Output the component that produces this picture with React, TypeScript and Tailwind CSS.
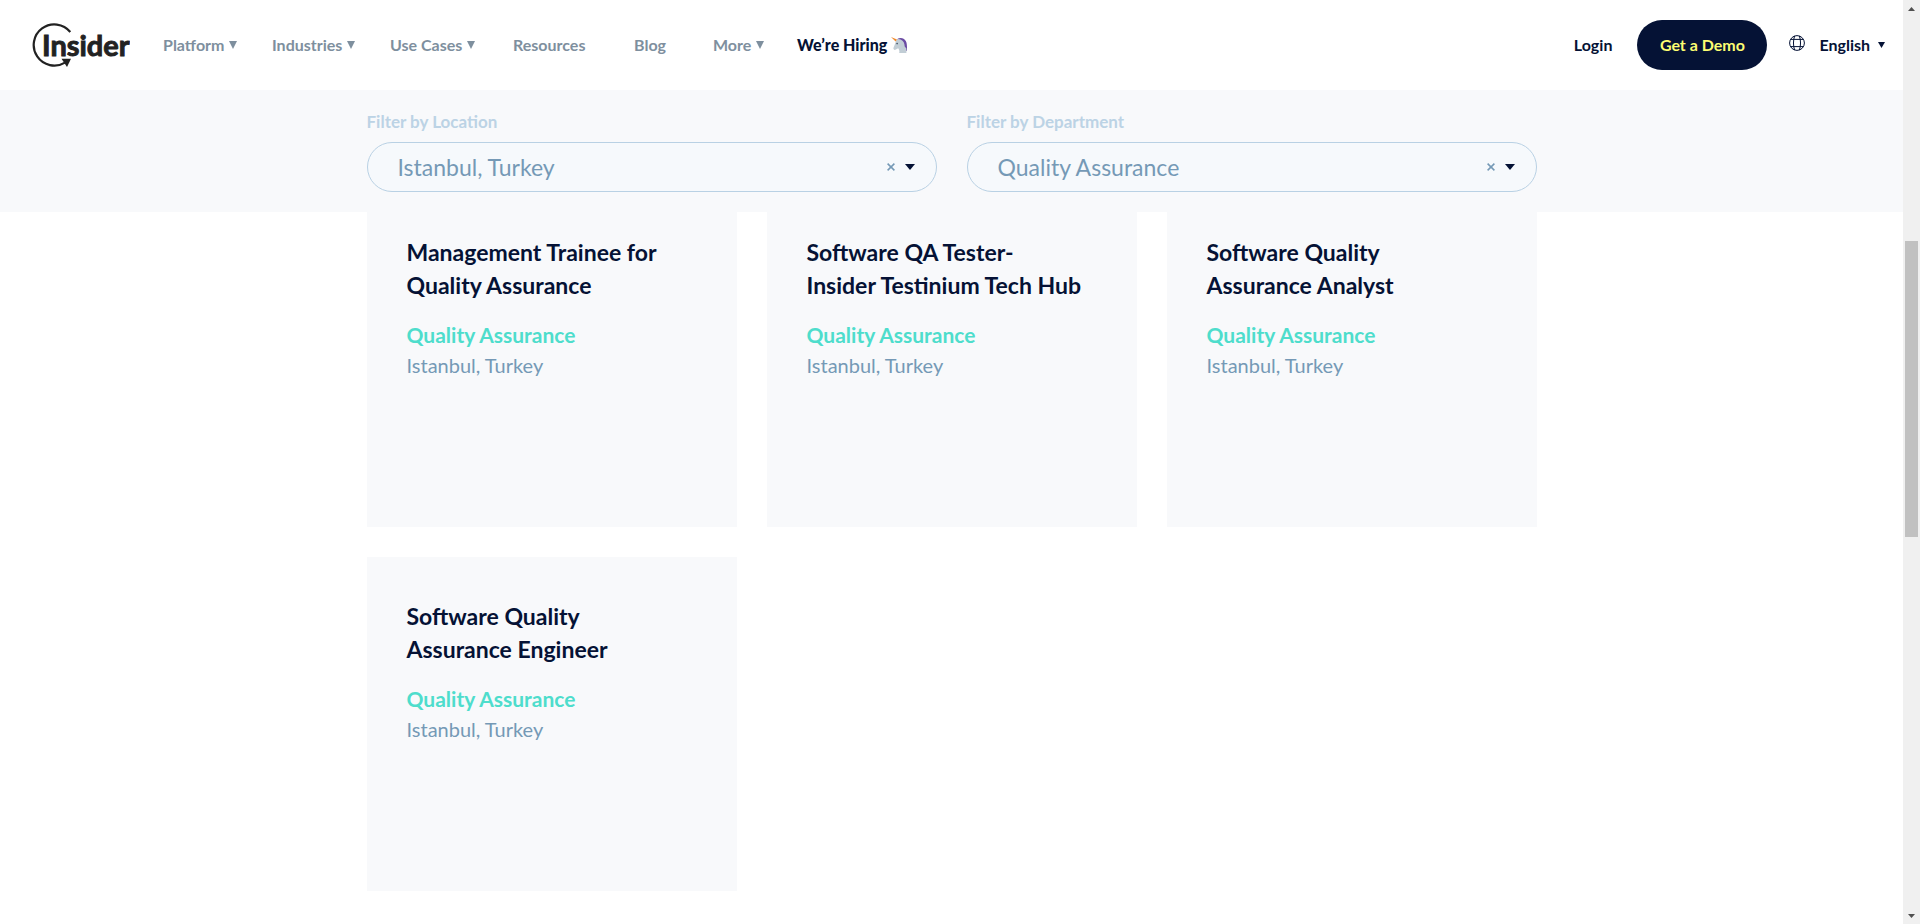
import React from "react";

type NavItem = { label: string; width: string; menu: boolean };

const navItems: NavItem[] = [
  { label: "Platform", width: "w-[109px]", menu: true },
  { label: "Industries", width: "w-[118px]", menu: true },
  { label: "Use Cases", width: "w-[123px]", menu: true },
  { label: "Resources", width: "w-[121px]", menu: false },
  { label: "Blog", width: "w-[79px]", menu: false },
  { label: "More", width: "w-[84px]", menu: true },
];

const jobs: [string, string][] = [
  ["Management Trainee for", "Quality Assurance"],
  ["Software QA Tester-", "Insider Testinium Tech Hub"],
  ["Software Quality", "Assurance Analyst"],
  ["Software Quality", "Assurance Engineer"],
];

function Triangle({ className }: { className: string }) {
  return (
    <svg viewBox="0 0 8 8" preserveAspectRatio="none" className={className} aria-hidden="true">
      <path d="M0 0H8L4 8Z" fill="currentColor" />
    </svg>
  );
}

function Logo() {
  return (
    <svg viewBox="0 0 98 44" className="h-11 w-[98px]" role="img" aria-label="Insider">
      <path d="M38.3 9A20.6 20.6 0 1 0 33 39.6" fill="none" stroke="#222" strokeWidth="2.2" />
      <path d="M29.5 35.8H39L35 44Z" fill="#222" />
      <text
        x="10"
        y="32.5"
        fontSize="29"
        fontWeight="700"
        fill="#222"
        stroke="#222"
        strokeWidth="0.9"
        className="font-['Lato',sans-serif]"
      >
        Insider
      </text>
    </svg>
  );
}

function Unicorn() {
  return (
    <svg viewBox="0 0 16 16" className="h-4 w-4" aria-hidden="true">
      <path d="M6 2.2C9 .2 13 .8 14.8 4C16.2 6.6 16 10 16 14L12.6 12L9 4Z" fill="#6b4ba3" />
      <path d="M5 3.4L7.2 2L9.6 2.6C12.6 4 13.6 6.4 13.7 9.4L15.4 11.6V16H8.2C8.8 13.6 8 12.3 7.2 11.2L4.8 12.6C3.6 13.5 2.2 12.4 2.4 11L4.4 6Z" fill="#c1cdd5" />
      <path d="M0 0L6 2.5L4.6 4.6Z" fill="#f08a2c" />
      <circle cx="6.1" cy="6.6" r=".8" fill="#33475b" />
    </svg>
  );
}

function Globe() {
  return (
    <svg viewBox="0 0 16 16" className="mb-1 h-4 w-4" fill="none" stroke="#051235" strokeWidth="1" aria-hidden="true">
      <circle cx="8" cy="8" r="7.4" />
      <path d="M5.6 1C4.1 5 4.1 11 5.6 15M10.4 1C11.9 5 11.9 11 10.4 15M1.8 4.4H14.2M1.8 11.6H14.2" />
    </svg>
  );
}

function Filter({ id, label, value }: { id: string; label: string; value: string }) {
  return (
    <div className="flex flex-col">
      <label htmlFor={id} className="mb-2 h-6 text-[17px] leading-6 font-bold text-[#bcd3e5]">
        {label}
      </label>
      <div className="relative">
        <select
          id={id}
          defaultValue={value}
          className="h-[50px] w-full appearance-none rounded-full border border-[#b9d1e4] bg-[#f6f9fc] pr-20 pl-[30px] text-[23px] text-[#7599b6] outline-none"
        >
          <option>{value}</option>
        </select>
        <button type="button" aria-label={`Clear ${label}`} className="absolute top-[21px] right-[42px] text-[#7599b6]">
          <svg viewBox="0 0 8 8" className="h-2 w-2" aria-hidden="true">
            <path d="M.6 .6L7.4 7.4M7.4 .6L.6 7.4" stroke="currentColor" strokeWidth="1.5" />
          </svg>
        </button>
        <Triangle className="pointer-events-none absolute top-[22px] right-[22px] h-1.5 w-2.5 text-[#051235]" />
      </div>
    </div>
  );
}

function JobCard({ title }: { title: [string, string] }) {
  return (
    <article className="min-h-[334px] bg-[#f8f9fb] px-10 pt-[43px]">
      <h3 className="mb-[17px] text-[23px] leading-[33px] font-bold text-[#051235]">
        {title[0]}
        <br />
        {title[1]}
      </h3>
      <p className="text-[21px] leading-[31px] font-bold text-[#4eddcc]">Quality Assurance</p>
      <p className="text-[20px] leading-[31px] text-[#7599b6]">Istanbul, Turkey</p>
    </article>
  );
}

function Scrollbar() {
  return (
    <div className="flex w-[17px] shrink-0 flex-col items-center bg-[#f0f0f0] text-[#505050]" aria-hidden="true">
      <div className="flex h-[17px] items-center justify-center">
        <Triangle className="h-1 w-[7px] rotate-180" />
      </div>
      <div className="grow-[224]" />
      <div className="w-[13px] grow-[296] bg-[#c1c1c1]" />
      <div className="grow-[370]" />
      <div className="flex h-[17px] items-center justify-center">
        <Triangle className="h-1 w-[7px]" />
      </div>
    </div>
  );
}

export default function App() {
  return (
    <div className="flex min-h-screen bg-white font-['Lato',sans-serif]">
      <div className="min-w-0 flex-1">
        <header className="flex h-[90px] items-center justify-between pr-[18px] pl-8">
          <div className="flex items-center">
            <a href="#home" className="mr-[33px]">
              <Logo />
            </a>
            <nav className="flex items-center text-[16px] leading-6 font-bold text-[#7e8f9e]">
              {navItems.map((item) => (
                <a key={item.label} href="#menu" className={`flex items-center gap-[5px] whitespace-nowrap ${item.width}`}>
                  {item.label}
                  {item.menu && <Triangle className="h-2 w-2" />}
                </a>
              ))}
              <a href="#hiring" className="flex items-center gap-1 font-black whitespace-nowrap text-[#051235]">
                We’re Hiring
                <Unicorn />
              </a>
            </nav>
          </div>
          <div className="flex items-center text-[16px] leading-6 font-bold text-[#051235]">
            <a href="#login" className="mr-[25px]">
              Login
            </a>
            <a
              href="#demo"
              className="mr-[22px] flex h-[50px] w-[130px] items-center justify-center rounded-full bg-[#051235] text-[#fdfd72]"
            >
              Get a Demo
            </a>
            <button type="button" className="flex items-center">
              <Globe />
              <span className="mr-2 ml-3.5">English</span>
              <Triangle className="h-1.5 w-[7px]" />
            </button>
          </div>
        </header>

        <section className="relative h-[122px] bg-[#f8f9fb] pt-5">
          <div className="mx-auto grid w-full max-w-[1170px] grid-cols-2 gap-[30px]">
            <Filter id="location" label="Filter by Location" value="Istanbul, Turkey" />
            <Filter id="department" label="Filter by Department" value="Quality Assurance" />
          </div>
        </section>

        <main className="mx-auto -mt-[19px] grid w-full max-w-[1170px] grid-cols-3 gap-[30px]">
          {jobs.map((title) => (
            <JobCard key={title.join(" ")} title={title} />
          ))}
        </main>
      </div>
      <Scrollbar />
    </div>
  );
}
